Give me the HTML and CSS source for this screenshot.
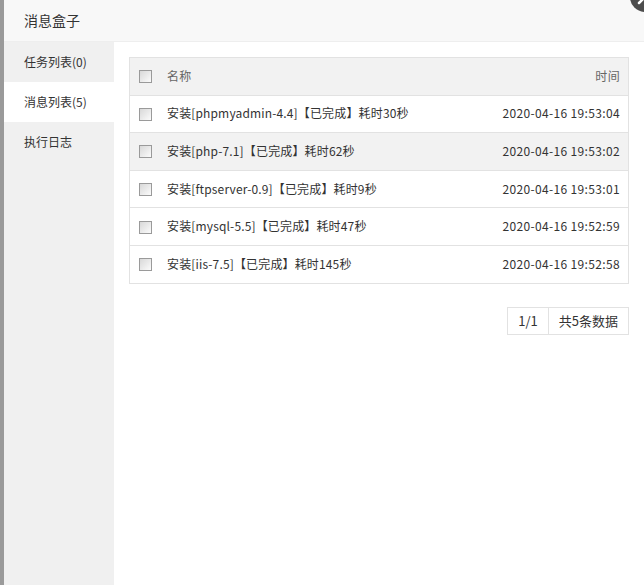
FILE: index.html
```html
<!DOCTYPE html>
<html lang="zh-CN">
<head>
  <meta charset="UTF-8" />
  <title>消息盒子</title>
  <link rel="stylesheet" href="styles.css">
</head>
<body>
  <div class="shade"></div>
  <div class="layer">
    <div class="layer-title">消息盒子</div>
    <span class="layer-close">
      <svg width="30" height="30" viewBox="0 0 30 30">
        <circle cx="15" cy="15" r="15" fill="#4d4d4d" />
        <path d="M9 9 L21 21 M21 9 L9 21" stroke="#fff" stroke-width="2.5" stroke-linecap="round" />
      </svg>
    </span>
    <div class="layer-body">
      <ul class="tabs">
        <li>任务列表(0)</li>
        <li class="active">消息列表(5)</li>
        <li>执行日志</li>
      </ul>
      <div class="content">
        <table class="msg-table">
          <thead>
            <tr>
              <th class="chk"><span class="checkbox"></span></th>
              <th class="name">名称</th>
              <th class="time">时间</th>
            </tr>
          </thead>
          <tbody>
            <tr>
              <td class="chk"><span class="checkbox"></span></td>
              <td class="name">安装[phpmyadmin-4.4]【已完成】耗时30秒</td>
              <td class="time">2020-04-16 19:53:04</td>
            </tr>
            <tr class="hover">
              <td class="chk"><span class="checkbox"></span></td>
              <td class="name">安装[php-7.1]【已完成】耗时62秒</td>
              <td class="time">2020-04-16 19:53:02</td>
            </tr>
            <tr>
              <td class="chk"><span class="checkbox"></span></td>
              <td class="name">安装[ftpserver-0.9]【已完成】耗时9秒</td>
              <td class="time">2020-04-16 19:53:01</td>
            </tr>
            <tr>
              <td class="chk"><span class="checkbox"></span></td>
              <td class="name">安装[mysql-5.5]【已完成】耗时47秒</td>
              <td class="time">2020-04-16 19:52:59</td>
            </tr>
            <tr>
              <td class="chk"><span class="checkbox"></span></td>
              <td class="name">安装[iis-7.5]【已完成】耗时145秒</td>
              <td class="time">2020-04-16 19:52:58</td>
            </tr>
          </tbody>
        </table>
        <div class="page">
          <span>1/1</span>
          <span>共5条数据</span>
        </div>
      </div>
    </div>
  </div>
</body>
</html>
```

FILE: styles.css
```css
html, body {
  height: 100%;
}
body {
  margin: 0;
  display: flex;
  font-family: "Noto Sans CJK SC", "Noto Sans", sans-serif;
  color: #333;
  overflow: hidden;
}
.shade {
  width: 4px;
  flex-shrink: 0;
  background-color: #9a9a9a;
}
.layer {
  flex: 1;
  display: flex;
  flex-direction: column;
  position: relative;
  background-color: #fff;
}
.layer-title {
  height: 41px;
  line-height: 40px;
  padding-left: 20px;
  font-size: 14px;
  background-color: #f8f8f8;
  border-bottom: 1px solid #eee;
}
.layer-close {
  position: absolute;
  top: -18px;
  right: -16px;
  width: 30px;
  height: 30px;
}
.layer-body {
  flex: 1;
  display: flex;
}
.tabs {
  list-style: none;
  margin: 0;
  padding: 0;
  width: 110px;
  background-color: #f0f0f0;
}
.tabs li {
  height: 40px;
  line-height: 40px;
  padding-left: 20px;
  font-size: 12px;
}
.tabs li.active {
  background-color: #fff;
}
.content {
  flex: 1;
  padding: 15px;
}
.msg-table {
  width: 100%;
  border-collapse: collapse;
  border: 1px solid #e2e2e2;
  font-size: 12px;
}
.msg-table th, .msg-table td {
  height: 34.6px;
  padding: 0 0 2px 0;
  border-bottom: 1px solid #e2e2e2;
  font-weight: normal;
  text-align: left;
}
.msg-table thead tr, .msg-table tr.hover {
  background-color: #f2f2f2;
}
.msg-table th {
  color: #666;
}
.msg-table .chk {
  width: 13px;
  padding-left: 9px;
  padding-bottom: 0;
}
.msg-table .name {
  padding-left: 15px;
  letter-spacing: 0.15px;
}
.msg-table .time {
  text-align: right;
  padding-right: 8px;
  letter-spacing: 0.35px;
}
.checkbox {
  display: block;
  width: 11px;
  height: 11px;
  border: 1px solid #9a9a9a;
  background: linear-gradient(135deg, #d8d8d8, #fbfbfb);
  margin-top: 1px;
}
.page {
  display: flex;
  justify-content: flex-end;
  margin-top: 23px;
  font-size: 13px;
  color: #333;
}
.page span {
  height: 26px;
  line-height: 25px;
  padding: 0 10px;
  border: 1px solid #e2e2e2;
}
.page span + span {
  border-left: none;
}
```
